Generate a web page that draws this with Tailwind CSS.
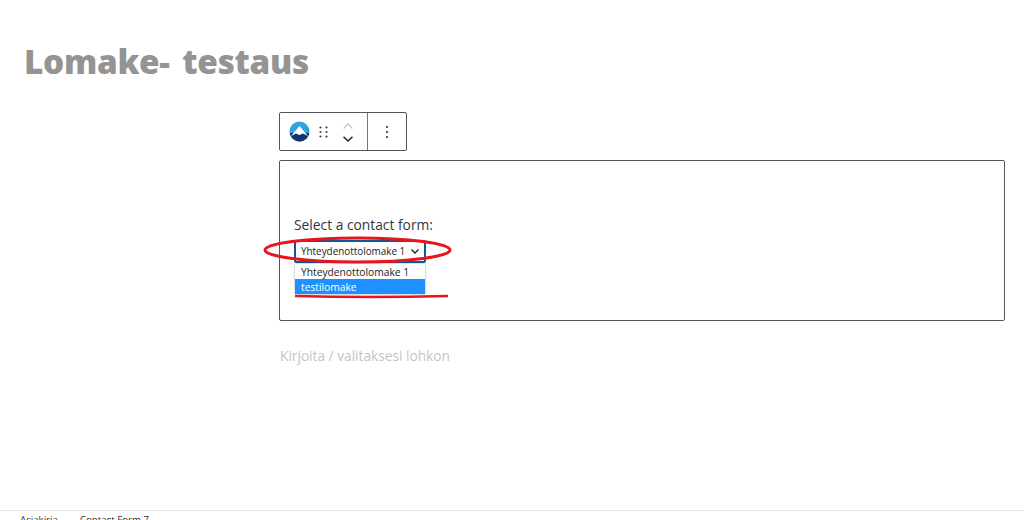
<!DOCTYPE html>
<html lang="fi">
<head>
<meta charset="utf-8">
<script src="https://cdn.jsdelivr.net/npm/@tailwindcss/browser@4"></script>
<title>Lomake- testaus</title>
</head>
<body class="bg-white overflow-hidden font-['Open_Sans','Noto_Sans',sans-serif]">
<div class="relative w-[1024px] h-[520px] overflow-hidden flex flex-col">
  <main class="flex-1 flex flex-col">
    <h1 class="pl-6 pt-[39px] h-[112px] text-[33.3px] leading-[45px] font-['Noto_Sans',sans-serif] font-black text-[#949494] tracking-[-0.3px] [word-spacing:-2px]">Lomake-&nbsp; testaus</h1>
    <div class="pl-[279px] pr-[19px]">
      <div class="flex w-[128px] h-[39px] border border-[#555] rounded-[2px] bg-white">
        <div class="w-[88px] flex items-center border-r border-[#777] pl-[9px]">
          <svg width="21" height="21" viewBox="0 0 21 21" class="shrink-0">
            <defs><clipPath id="c"><circle cx="10.5" cy="10.5" r="10"/></clipPath></defs>
            <g clip-path="url(#c)">
              <rect width="21" height="21" fill="#2ea3dc"/>
              <rect y="12" width="21" height="9" fill="#12366b"/>
              <path d="M2 15 L10.5 5 L19 15 L14 12.5 L10.5 14 L7 12.5Z" fill="#fff"/>
            </g>
          </svg>
          <svg width="10" height="12" viewBox="0 0 10 12" class="ml-[9px] shrink-0" fill="#444">
            <circle cx="1.5" cy="1.5" r="1.1"/><circle cx="7.5" cy="1.5" r="1.1"/>
            <circle cx="1.5" cy="6" r="1.1"/><circle cx="7.5" cy="6" r="1.1"/>
            <circle cx="1.5" cy="10.5" r="1.1"/><circle cx="7.5" cy="10.5" r="1.1"/>
          </svg>
          <div class="ml-[14px] flex flex-col gap-[7px] pt-px">
            <svg width="10" height="6" viewBox="0 0 10 6" fill="none" stroke="#c4c4c4" stroke-width="1.3"><path d="M0.5 5.5 L5 1 L9.5 5.5"/></svg>
            <svg width="10" height="6" viewBox="0 0 10 6" fill="none" stroke="#222" stroke-width="1.5"><path d="M0.5 0.8 L5 5 L9.5 0.8"/></svg>
          </div>
        </div>
        <div class="flex-1 flex items-center justify-center">
          <svg width="4" height="14" viewBox="0 0 4 14" fill="#333">
            <circle cx="2" cy="2" r="1.1"/><circle cx="2" cy="7" r="1.1"/><circle cx="2" cy="12" r="1.1"/>
          </svg>
        </div>
      </div>
      <section class="mt-[9px] h-[161px] w-[726px] border border-[#555] rounded-[2px] pl-[14px] pt-[54px]">
        <p class="text-[13.8px] leading-5 text-[#32373c]">Select a contact form:</p>
        <div class="relative mt-[5px] w-[132px] h-[23px] border-2 border-[#0f5a96] rounded-[2px] flex items-center justify-between pl-[5px] pr-[5px] text-[9.9px] text-[#222] whitespace-nowrap">
          <span>Yhteydenottolomake 1</span>
          <svg width="8" height="5" viewBox="0 0 8 5" fill="none" stroke="#222" stroke-width="1.3"><path d="M0.5 0.5 L4 4 L7.5 0.5"/></svg>
          <ul class="absolute left-[-1px] top-[22px] w-[130px] bg-white text-[10.25px] leading-[16px] text-[#222] shadow-[0_0_2px_rgba(0,0,0,0.4)]">
            <li class="pl-[6px] h-[15px]">Yhteydenottolomake 1</li>
            <li class="pl-[6px] h-[15px] bg-[#1e90ff] text-white">testilomake</li>
          </ul>
        </div>
      </section>
      <p class="mt-[25px] pl-px text-[13.7px] leading-5 text-[#c4c4c4]">Kirjoita / valitaksesi lohkon</p>
    </div>
  </main>
  <footer class="h-[10px] border-t border-[#e2e4e7] pl-5 pt-[2px] flex gap-[22px] text-[9.7px] leading-[14px] text-[#333] overflow-hidden shrink-0">
    <span>Asiakirja</span><span>Contact Form 7</span>
  </footer>
  <svg class="absolute left-0 top-0 pointer-events-none" width="1024" height="520" viewBox="0 0 1024 520" fill="none">
    <ellipse cx="357.5" cy="250" rx="92.5" ry="12" stroke="#e8141e" stroke-width="3"/>
    <path d="M295 296 Q370 298 448 296" stroke="#e8141e" stroke-width="2.6"/>
  </svg>
</div>
</body>
</html>
